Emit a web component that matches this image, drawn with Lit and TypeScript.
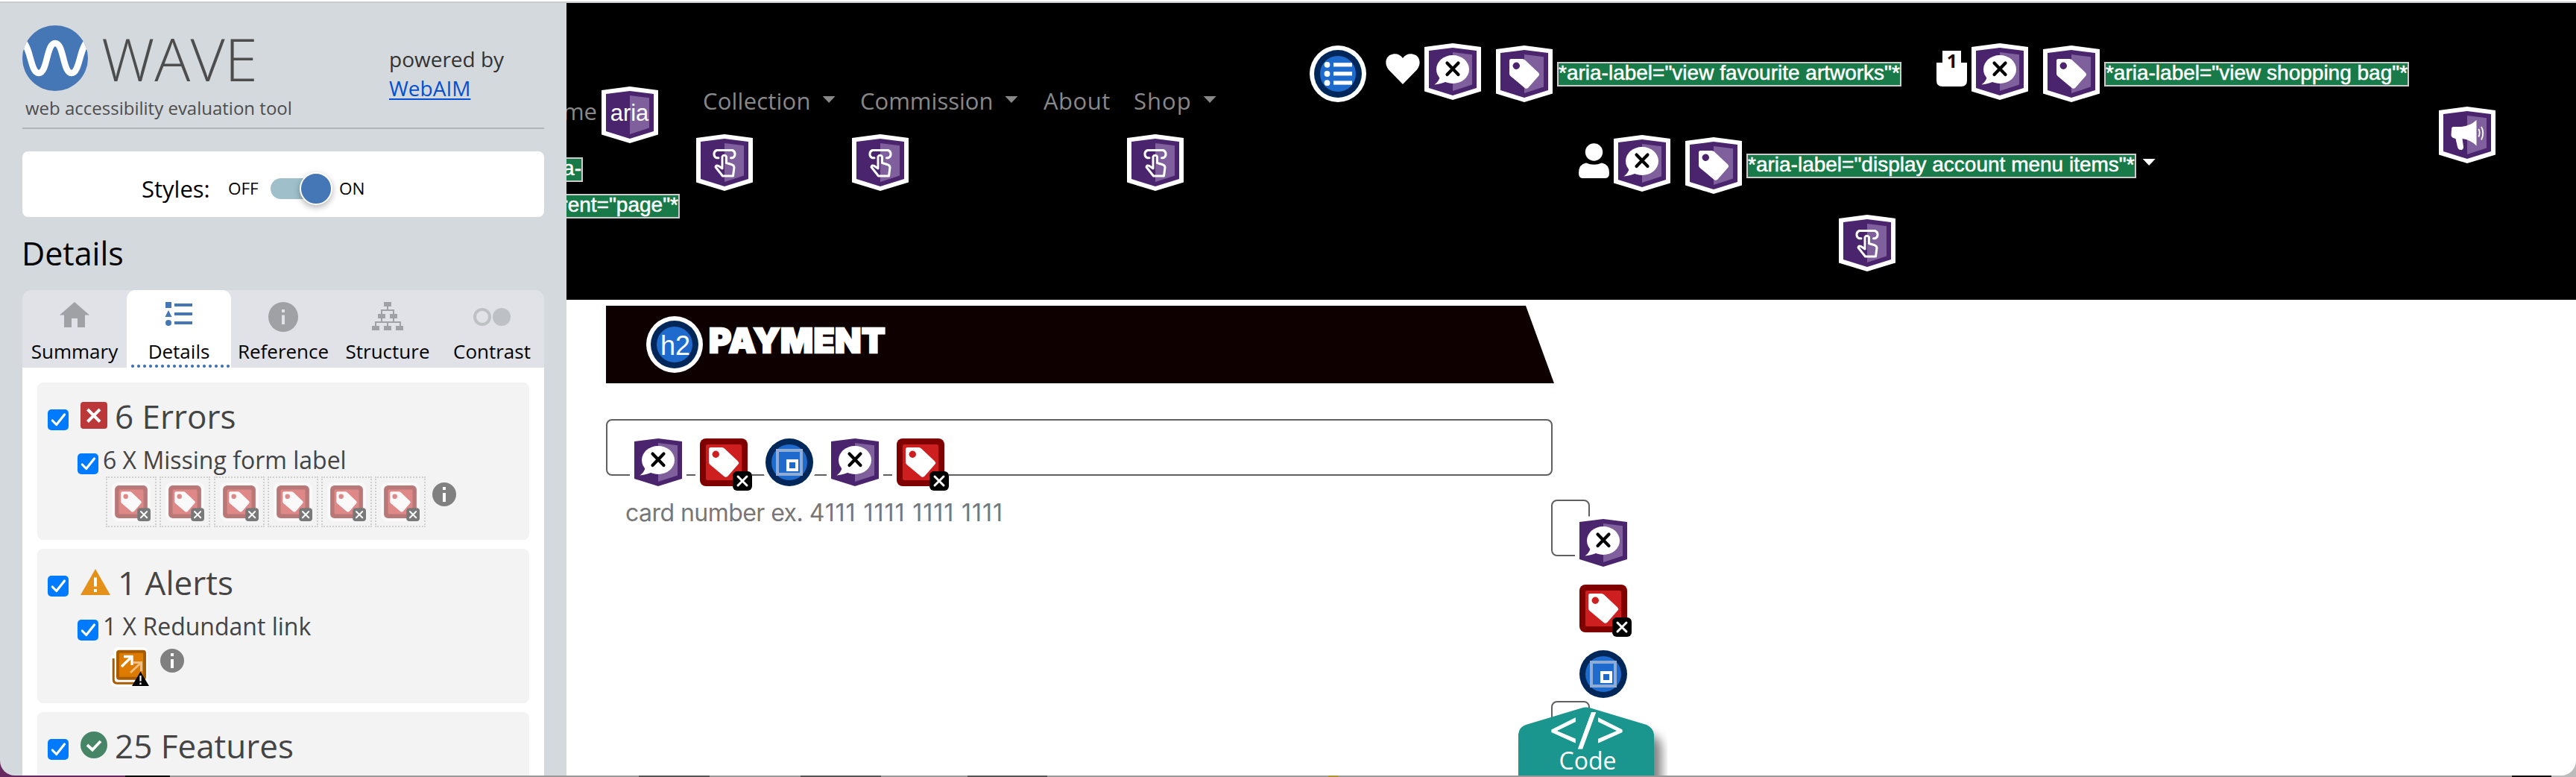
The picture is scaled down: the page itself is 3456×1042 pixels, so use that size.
import { LitElement, html, svg, css } from 'lit';
import { customElement, property } from 'lit/decorators.js';
import { classMap } from 'lit/directives/class-map.js';

const TAG = 'M20.5 18H35.5Q37.5 18 39 19.5L57 36.5Q59 38.5 57.5 40.5L43.5 56.5Q40.5 59 38 56.5L19.5 41Q18 39.5 18 37.5V20.5Q18 18 20.5 18Z';

const shield = (inner: unknown) => svg`
  <path d="M38 0L76 5V64.5L38 76L0 64.5V5Z" fill="#fff"/>
  <path d="M38 6L70 10V60L38 70L6 60V10Z" fill="#4a256d"/>
  <path d="M38 12L64 15.3V55.5L38 64Z" fill="#805f9d"/>
  ${inner}`;

const circleBadge = (inner: unknown) => svg`
  <circle cx="38" cy="38" r="38" fill="#fff"/>
  <circle cx="38" cy="38" r="32" fill="#002759"/>
  <circle cx="38" cy="38" r="24" fill="#1f6bcd"/>
  ${inner}`;

const BADGES: Record<string, unknown> = {
  aria: shield(svg`<text x="37.5" y="45.5" text-anchor="middle" font-family="Liberation Sans, sans-serif" font-size="31" fill="#fff">aria</text>`),
  touch: shield(svg`
    <g fill="none" stroke="#fff" stroke-width="3" stroke-linejoin="round" stroke-linecap="round">
      <path d="M30 31.8H27.5A5.5 5.5 0 0 1 27.5 21.5H48.5A5.5 5.5 0 0 1 48.5 31.8H46.5"/>
      <path d="M35 44V30A3 3 0 0 1 40.5 30V38.5L48 40.8Q51 41.8 51 44.5L49.5 56H35.5L26 44Q26.5 41 29.5 42.3L35 46Z"/>
    </g>`),
  speech: shield(svg`
    <ellipse cx="38" cy="35" rx="22" ry="19" fill="#fff"/>
    <path d="M21 44Q20 51 13.5 55.5Q24 54 30 51Z" fill="#fff"/>
    <path d="M30.5 26.5L45.5 42M45.5 26.5L30.5 42" stroke="#000" stroke-width="4.2" stroke-linecap="round"/>`),
  tag: shield(svg`<path d=${TAG} fill="#fff"/><circle cx="27.3" cy="27.3" r="4.7" fill="#4a256d"/>`),
  megaphone: shield(svg`
    <path d="M17 30Q17 27 20 27H30Q42 26 50.5 18V52.5Q42 44 31.5 43L33 54Q33 58 29.5 58Q26 58 25 54L22.5 43Q16.5 42 16.5 38Z" fill="#fff"/>
    <path d="M53.3 30Q56 35 53.3 40.5M57 27Q61.5 35 57 44.5" fill="none" stroke="#fff" stroke-width="1.8"/>`),
  list: circleBadge(svg`
    <g fill="#fff"><circle cx="23.5" cy="25.8" r="3.9"/><circle cx="23.5" cy="38" r="3.9"/><circle cx="23.5" cy="50.2" r="3.9"/>
    <rect x="32" y="23.2" width="25" height="5.2"/><rect x="32" y="35.2" width="25" height="5.2"/><rect x="32" y="47.4" width="25" height="5.2"/></g>`),
  h2: circleBadge(svg`<text x="39" y="52" text-anchor="middle" font-family="Liberation Sans, sans-serif" font-size="36" fill="#fff">h2</text>`),
  fieldset: circleBadge(svg`
    <rect x="22" y="22" width="32" height="32" fill="none" stroke="#8facd6" stroke-width="4"/>
    <rect x="36" y="36" width="12" height="12" fill="none" stroke="#fff" stroke-width="4"/>`),
  label: svg`
    <rect width="76" height="76" rx="12" fill="#fff"/>
    <rect x="6" y="6" width="64" height="64" rx="8" fill="#800000"/>
    <rect x="14" y="14" width="48" height="48" rx="2" fill="#cd1f1f"/>
    <path d=${TAG} fill="#fff"/><circle cx="27.3" cy="27.3" r="4.7" fill="#cd1f1f"/>
    <rect x="50" y="50" width="26" height="26" rx="6" fill="#000"/>
    <path d="M57 57L69 69M69 57L57 69" stroke="#fff" stroke-width="3" stroke-linecap="round"/>`,
};

@customElement('wave-badge')
class WaveBadge extends LitElement {
  @property() kind = 'tag';
  static styles = css`
    :host { display: block; flex: none; width: 76px; height: 76px; }
    svg { display: block; width: 100%; height: 100%; }
  `;
  render() {
    return html`<svg viewBox="0 0 76 76">${BADGES[this.kind]}</svg>`;
  }
}

@customElement('check-box')
class CheckBox extends LitElement {
  static styles = css`
    :host { display: block; flex: none; width: 28px; height: 28px; border-radius: 5px; background: #007aff; }
    svg { display: block; }
  `;
  render() {
    return html`<svg width="28" height="28"><path d="M6.3 15L11.7 20.5L22.5 7" fill="none" stroke="#fff" stroke-width="3.2" stroke-linecap="round" stroke-linejoin="round"/></svg>`;
  }
}

const TABS = [
  { name: 'Summary', icon: svg`<path d="M28 8L48 25.5H42V42H32V30H24V42H14V25.5H8Z" fill="#9fa1a4"/>` },
  {
    name: 'Details', active: true,
    icon: svg`<g fill="#4577b6"><rect x="10" y="8" width="8" height="8"/><path d="M14 19L18.5 28H9.5Z"/><circle cx="14" cy="36" r="4"/>
      <rect x="22" y="10" width="24" height="4"/><rect x="22" y="22" width="24" height="4"/><rect x="22" y="34" width="24" height="4"/></g>`,
  },
  { name: 'Reference', icon: svg`<circle cx="28" cy="28" r="20" fill="#9fa1a4"/><path d="M28 18V22M28 25.5V38" stroke="#e0e2e7" stroke-width="4"/>` },
  {
    name: 'Structure',
    icon: svg`<g fill="#9fa1a4"><rect x="23" y="8" width="10" height="6"/><rect x="15" y="24" width="10" height="6"/><rect x="31" y="24" width="10" height="6"/>
      <rect x="7" y="40" width="10" height="6"/><rect x="23" y="40" width="10" height="6"/><rect x="39" y="40" width="10" height="6"/></g>
      <path d="M28 14V19M20 24V19H36V24M20 30V35M36 30V35M12 40V35H45V40M28 35V40" fill="none" stroke="#9fa1a4" stroke-width="2"/>`,
  },
  { name: 'Contrast', icon: svg`<circle cx="15" cy="28" r="10" fill="none" stroke="#bdc1c4" stroke-width="4"/><circle cx="41" cy="28" r="12" fill="#bdc1c4"/>` },
];

const info = html`<svg class="info" width="32" height="32"><circle cx="16" cy="16" r="16" fill="#808080"/><path d="M16 6V10M16 14V26" stroke="#fff" stroke-width="4"/></svg>`;

@customElement('wave-sidebar')
class WaveSidebar extends LitElement {
  static styles = css`
    :host { display: flex; flex-direction: column; box-sizing: border-box; padding: 0 30px; background: #d4d9dd;
      font-family: "Open Sans", sans-serif; color: #000; overflow: hidden; border-bottom-left-radius: 20px; }
    svg { display: block; flex: none; }
    .head { display: flex; box-sizing: border-box; height: 169px; flex: none; padding-top: 30px; border-bottom: 2px solid #b0b7bb; }
    .brand { width: 492px; }
    .logo { display: flex; align-items: center; gap: 18px; height: 88px; }
    .wave { font-weight: 300; font-size: 80px; line-height: 88px; color: #4d4d4d; }
    .tagline { margin-top: 7px; padding-left: 4px; font-size: 24px; line-height: 32px; color: #4d4d4d; white-space: nowrap; }
    .powered { padding-top: 26px; font-size: 28px; line-height: 39px; color: #333; }
    .powered a { display: block; width: fit-content; color: #0550d0; text-decoration: underline; text-decoration-thickness: 1.5px; text-underline-offset: 3px; }
    .styles { display: flex; align-items: center; flex: none; box-sizing: border-box; height: 88px; margin-top: 30px; padding: 11px 0 0 160px; border-radius: 8px; background: #fff; }
    .styles b { width: 116px; font-weight: 400; font-size: 31px; }
    .styles span { font-size: 22.5px; }
    .off { width: 57px; }
    .track { width: 81px; height: 28px; margin-right: 11px; border-radius: 14px; background: #9fc0ca; }
    .knob { width: 40px; height: 40px; margin: -8px 0 0 39px; border: 2px solid #fff; border-radius: 50%; background: #4577b6; box-shadow: 0 3px 8px rgba(0, 0, 0, .3); }
    h1 { margin: 19px 0 19px -1px; font-weight: 400; font-size: 43px; line-height: 60px; }
    .tabs { display: flex; flex: none; height: 104px; border-radius: 12px 12px 0 0; background: #e0e2e7; }
    .tab { display: flex; flex-direction: column; align-items: center; box-sizing: border-box; width: 140px; padding-top: 8px; font-size: 26px; line-height: 36px; border-radius: 12px 12px 0 0; }
    .tab.active { background: radial-gradient(circle at 4px 2px, #4577b6 1.8px, transparent 2.3px) 2px 100% / 8px 4px repeat-x, #fff; background-clip: content-box, border-box; background-origin: content-box, border-box; padding-left: 2px; padding-right: 2px; }
    .panel { flex: 1; display: flex; flex-direction: column; gap: 12px; padding: 20px; background: #fff; min-height: 0; }
    .card { flex: none; box-sizing: border-box; padding: 15px 14px 0; border-radius: 8px; background: #f3f3f3; color: #444; }
    .errors { height: 211px; }
    .alerts { height: 207px; }
    .features { height: 207px; }
    .title { display: flex; align-items: flex-start; font-size: 44px; line-height: 60px; }
    .title check-box { margin: 21px 16px 0 0; }
    .title svg { margin: 11px 10px 0 0; }
    .sub { display: flex; align-items: flex-start; margin-top: 9px; padding-left: 40px; font-size: 32px; line-height: 40px; white-space: nowrap; }
    .sub check-box { margin: 11px 6px 0 0; }
    .icons { display: flex; align-items: flex-start; gap: 4.3px; margin-top: 2px; padding-left: 78px; }
    .slot { display: flex; align-items: center; justify-content: center; box-sizing: border-box; width: 68px; height: 68px; border: 2px dotted #d0d0d0; }
    .slot wave-badge { width: 52px; height: 52px; opacity: .5; }
    .info { margin: 8px 0 0 4px; }
    .redundant { margin: 6px 6px 0 6px; }
  `;
  render() {
    return html`
      <div class="head">
        <div class="brand">
          <div class="logo">
            <svg width="88" height="88"><clipPath id="c"><circle cx="44" cy="44" r="44"/></clipPath>
              <g clip-path="url(#c)"><rect width="88" height="88" fill="#4577b6"/>
              <path d="M0 20C12 32 11 64 22 64C34 64 32 24 44 24C56 24 54 64 66 64C77 64 76 32 88 20" fill="none" stroke="#fff" stroke-width="8.5"/></g></svg>
            <span class="wave">WAVE</span>
          </div>
          <div class="tagline">web accessibility evaluation tool</div>
        </div>
        <div class="powered">powered by<a>WebAIM</a></div>
      </div>
      <div class="styles"><b>Styles:</b><span class="off">OFF</span><div class="track"><div class="knob"></div></div><span>ON</span></div>
      <h1>Details</h1>
      <div class="tabs">${TABS.map(t => html`<div class=${classMap({ tab: true, active: !!t.active })}><svg width="56" height="56">${t.icon}</svg>${t.name}</div>`)}</div>
      <div class="panel">
        <div class="card errors">
          <div class="title"><check-box></check-box>
            <svg width="36" height="36"><rect width="36" height="36" rx="4" fill="#bc3838"/><path d="M9.5 10L26 26.5M26 10L9.5 26.5" stroke="#fff" stroke-width="4"/></svg>6 Errors</div>
          <div class="sub"><check-box></check-box>6 X Missing form label</div>
          <div class="icons">${Array.from({ length: 6 }, () => html`<div class="slot"><wave-badge kind="label"></wave-badge></div>`)}${info}</div>
        </div>
        <div class="card alerts">
          <div class="title"><check-box></check-box>
            <svg width="40" height="36"><path d="M20 1L40 36H0Z" fill="#e4911b"/><path d="M20 12.5V24.5M20 28V32" stroke="#fff" stroke-width="4"/></svg>1 Alerts</div>
          <div class="sub"><check-box></check-box>1 X Redundant link</div>
          <div class="icons">
            <svg class="redundant" width="53" height="53">
              <path d="M10 0H44Q50 1 50 7V32L52 53H7Q0 52 0 46V16Q0 11 5 11V6Q5 1 10 0Z" fill="#fff"/>
              <path d="M4.2 15V43Q4.2 48.2 9 48.2H34" fill="none" stroke="#a85c00" stroke-width="3"/>
              <rect x="8" y="3.7" width="40" height="40" rx="4" fill="#a85c00"/><rect x="12" y="7.7" width="32" height="32" rx="1" fill="#dc7b00"/>
              <path d="M27 34L41 21M31 20.5H41.5V32" fill="none" stroke="#f0be82" stroke-width="3"/>
              <path d="M15 26L28.5 13M18 12.5H29V24" fill="none" stroke="#fff" stroke-width="3.4"/>
              <path d="M40.5 32.5L52 52H29Z" fill="#000"/><path d="M40.5 38V45.5M40.5 47.5V50" stroke="#fff" stroke-width="2.2"/>
            </svg>${info}</div>
        </div>
        <div class="card features">
          <div class="title"><check-box></check-box>
            <svg width="36" height="36"><circle cx="18" cy="18" r="18" fill="#478567"/><path d="M9 18L16 24.5L27 13" fill="none" stroke="#fff" stroke-width="3.8"/></svg>25 Features</div>
        </div>
      </div>`;
  }
}

const heart = html`<svg class="i-heart" width="46" height="42" viewBox="0 0 46 42"><path d="M23 41L4 21.5C-2 14 0 5 6 1.8C12-1.3 19 0 23 6C27 0 34-1.3 40 1.8C46 5 48 14 42 21.5Z" fill="#fff"/></svg>`;
const bag = html`<svg class="i-bag" width="41" height="48" viewBox="0 0 41 48"><path d="M8 0H33V16H41V40Q41 48 33 48H8Q0 48 0 40V16H8Z" fill="#fff"/>
  <text x="21" y="23" text-anchor="middle" font-family="Open Sans, sans-serif" font-weight="700" font-size="25" fill="#1a0a0a">1</text></svg>`;
const person = html`<svg class="i-person" width="41" height="47" viewBox="0 0 41 47"><circle cx="20.5" cy="12" r="11.7" fill="#fff"/><path d="M10 26.5Q20.500 31 31 26.500Q41 28 41 40Q41 47 36 47H5Q0 47 0 40Q0 28 10 26.5Z" fill="#fff"/></svg>`;

const cluster = (icon: unknown, text: string) => html`
  <div class="cluster">${icon}<wave-badge kind="speech"></wave-badge><wave-badge class="second" kind="tag"></wave-badge><span class="note">${text}</span></div>`;

@customElement('site-page')
class SitePage extends LitElement {
  static styles = css`
    :host { display: flex; flex-direction: column; background: #fff; overflow: hidden; position: relative; border-bottom-right-radius: 20px; font-family: "Open Sans", sans-serif; }
    svg { display: block; flex: none; }
    header { display: flex; align-items: flex-start; height: 398px; flex: none; background: #000; }
    .home { width: 183px; padding-top: 112px; color: #888; }
    .current { display: flex; align-items: flex-start; }
    .me { display: flex; justify-content: flex-end; width: 41px; padding-top: 12px; margin-right: 6px; font-size: 31px; line-height: 42px; }
    .note { display: block; width: fit-content; border: 2px solid #ccc; padding-bottom: 4px; background: #187949; color: #fff; font: 28px/25px "Liberation Sans", sans-serif; white-space: nowrap; -webkit-text-stroke: .5px #fff; }
    .cut { direction: rtl; overflow: hidden; }
    .cut .note { direction: ltr; }
    .n1 { width: 22px; margin-top: 19px; }
    .n2 { width: 152px; margin-top: 16px; }
    nav { display: flex; padding-top: 110px; color: #888; font-size: 31px; line-height: 42px; }
    .item wave-badge { margin: 24px 0 0 -9px; }
    .item.i1 wave-badge { margin-left: -11px; }
    .link { display: flex; align-items: flex-start; gap: 16px; }
    .caret { width: 17px; height: 9px; margin-top: 15px; background: currentColor; clip-path: polygon(0 0, 100% 0, 50% 100%); }
    .i0 { width: 211px; letter-spacing: .2px; }
    .i1 { width: 246px; }
    .i2 { width: 121px; letter-spacing: .5px; }
    .i3 { width: 236px; letter-spacing: 1px; }
    .tools { display: flex; flex-direction: column; padding-top: 54px; color: #fff; }
    .row { display: flex; align-items: flex-start; }
    .r1 { height: 123px; }
    .r2 { height: 107px; padding-left: 361px; }
    .r3 { padding-left: 710px; }
    .r1 > wave-badge { margin: 3px 26px 0 0; }
    .r1 .cluster + .cluster { margin-left: 47px; }
    .r2 .caret { margin: 32px 0 0 9px; }
    .cluster { display: flex; align-items: flex-start; }
    .cluster svg { margin-right: 6px; }
    .i-heart { margin-top: 14px; }
    .i-bag { margin-top: 10px; }
    .i-person { margin-top: 11px; }
    .cluster .second { margin: 3px 6px 0 20px; }
    .cluster .note { margin-top: 25px; }
    .mega { margin: 139px 108px 0 auto; }
    main { display: flex; flex: 1; min-height: 0; padding-left: 53px; }
    .left { width: 1268px; flex: none; }
    .bar { display: flex; align-items: flex-start; box-sizing: border-box; width: 1272px; height: 104px; margin-top: 8px; padding: 14px 0 0 54px; background: #0e0000; clip-path: polygon(0 0, 1234px 0, 100% 100%, 0 100%); }
    h2 { margin: 8px 0 0 8px; font: 900 46px/48px "Inter", sans-serif; letter-spacing: .5px; color: #fff; -webkit-text-stroke: 2.4px #fff; }
    .field { display: flex; gap: 12px; box-sizing: border-box; width: 1270px; height: 76px; margin-top: 48px; padding: 18px 0 0 30px; border: 2px solid #606060; border-radius: 8px; }
    .hint { margin: 30px 0 0 26px; font: 32px/40px "Inter", sans-serif; letter-spacing: -.55px; color: #777; }
    .digits { letter-spacing: .95px; }
    .right { padding-top: 268px; }
    .box { box-sizing: border-box; width: 52px; height: 76px; border: 2px solid #606060; border-radius: 8px; }
    .stack { display: flex; flex-direction: column; gap: 12px; margin: -56px 0 -2px 32px; }
    .code { position: absolute; left: 1267px; bottom: 0; }
  `;
  render() {
    const items = [['Collection', true, true], ['Commission', true, true], ['About', false, false], ['Shop', true, true]] as const;
    return html`
      <header>
        <div class="home">
          <div class="current"><span class="me">me</span><wave-badge kind="aria"></wave-badge></div>
          <div class="cut n1"><span class="note">aria-</span></div>
          <div class="cut n2"><span class="note">current="page"*</span></div>
        </div>
        <nav>${items.map(([name, menu, touch], i) => html`
          <div class="item i${i}"><div class="link">${name}${menu ? html`<i class="caret"></i>` : ''}</div>${touch ? html`<wave-badge kind="touch"></wave-badge>` : ''}</div>`)}
        </nav>
        <div class="tools">
          <div class="row r1"><wave-badge kind="list"></wave-badge>
            ${cluster(heart, '*aria-label="view favourite artworks"*')}${cluster(bag, '*aria-label="view shopping bag"*')}</div>
          <div class="row r2">${cluster(person, '*aria-label="display account menu items"*')}<i class="caret"></i></div>
          <div class="row r3"><wave-badge kind="touch"></wave-badge></div>
        </div>
        <wave-badge class="mega" kind="megaphone"></wave-badge>
      </header>
      <main>
        <div class="left">
          <div class="bar"><wave-badge kind="h2"></wave-badge><h2>PAYMENT</h2></div>
          <div class="field">${['speech', 'label', 'fieldset', 'speech', 'label'].map(k => html`<wave-badge kind=${k}></wave-badge>`)}</div>
          <div class="hint">card number ex. <span class="digits">4111 1111 1111 1111</span></div>
        </div>
        <div class="right">
          <div class="box"></div>
          <div class="stack">${['speech', 'label', 'fieldset'].map(k => html`<wave-badge kind=${k}></wave-badge>`)}</div>
          <div class="box"></div>
        </div>
      </main>
      <svg class="code" width="210" height="100">
        <defs><filter id="s" x="-10%" y="-10%" width="130%" height="130%"><feGaussianBlur stdDeviation="7"/></filter></defs>
        <path d="M20 116V62Q22 48 32 46L102 24L190 46Q200 50 202 62V116Z" fill="#000" opacity=".5" filter="url(#s)"/>
        <path d="M10 100V45Q11 35 20 32L95 9.500Q101 7.500 107 9.500L182 32Q191 36 192 45V100Z" fill="#1a968f"/>
        <text x="102" y="64" text-anchor="middle" font-size="67" font-family="Open Sans, sans-serif" stroke="#fff" stroke-width=".8" fill="#fff">&lt;/&gt;</text>
        <text x="103" y="92" text-anchor="middle" font-size="32" font-family="Open Sans, sans-serif" fill="#fff">Code</text>
      </svg>`;
  }
}

@customElement('app-root')
class AppRoot extends LitElement {
  static styles = css`
    :host { display: block; }
    .desk { display: flex; flex-direction: column; box-sizing: border-box; width: 3456px; height: 1042px; overflow: hidden;
      background: linear-gradient(90deg, #652a60 168px, #000 168px 228px, #999 228px 857px, #555 857px 952px, #999 952px 1074px, #555 1074px 1182px, #999 1182px 1298px, #555 1298px 1405px, #999 1405px 1782px, #a89430 1782px 1795px, #999 1795px 3370px, #100c0c 3370px 3423px, #bbb 3423px); }
    .edge { flex: none; height: 2px; border-bottom: 2px solid #c9cccf; background: #fff; }
    .window { display: grid; grid-template-columns: 760px 2696px; height: 1036px; }
    .window > * { min-height: 0; height: 1036px; }
  `;
  render() {
    return html`<div class="desk"><div class="edge"></div><div class="window"><wave-sidebar></wave-sidebar><site-page></site-page></div></div>`;
  }
}
